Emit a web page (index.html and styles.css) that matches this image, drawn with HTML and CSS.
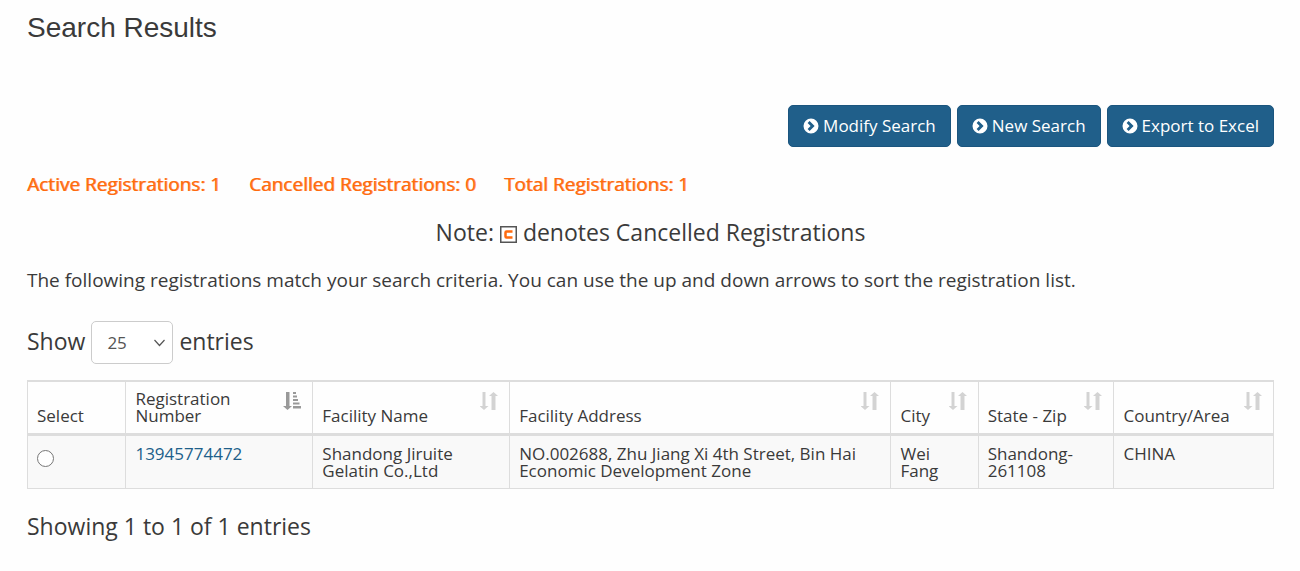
FILE: index.html
```
<!DOCTYPE html>
<html lang="en">
<head>
    <meta charset="UTF-8">
    <meta name="viewport" content="width=device-width, initial-scale=1.0">
    <title>Search Results</title>
    <link rel="stylesheet" href="styles.css">
</head>
<body>
    <!-- shared icons -->
    <svg class="sprite" aria-hidden="true">
        <symbol id="chevron" viewBox="0 0 16 16">
            <path fill="#fff" fill-rule="evenodd" d="M8 0.5a7.5 7.5 0 1 1 0 15a7.5 7.5 0 0 1 0-15zM6.600 3L4.600 5L7.600 8L4.600 11L6.600 13L11.600 8z"/>
        </symbol>
        <symbol id="sort" viewBox="0 0 18 18">
            <path d="M2.500 0h3v14h3l-4.500 4l-4.500-4h3zM11.500 18h4v-14h2.500l-4.500-4l-4.500 4h2.500z"/>
        </symbol>
        <symbol id="sort-asc" viewBox="0 0 18 18">
            <path d="M3 0h3.500v14h2.500l-4.500 4l-4.500-4h3zM10 0h3v2h-3zM10 3.500h4v2h-4zM10 7h5v2h-5zM10 10.500h6.500v2h-6.500zM10 14h8v2.500h-8z"/>
        </symbol>
    </svg>

    <div class="container">
        <h1>Search Results</h1>

        <div class="buttons">
            <button type="button"><svg class="btn-icon"><use href="#chevron"/></svg>Modify Search</button>
            <button type="button"><svg class="btn-icon"><use href="#chevron"/></svg>New Search</button>
            <button type="button"><svg class="btn-icon"><use href="#chevron"/></svg>Export to Excel</button>
        </div>

        <div class="totals">
            <span>Active Registrations: 1</span>
            <span>Cancelled Registrations: 0</span>
            <span>Total Registrations: 1</span>
        </div>

        <p class="note">Note:
            <svg class="cancelled-icon" viewBox="0 0 17 17" role="img" aria-label="Cancelled">
                <rect x="0.750" y="0.750" width="15.500" height="15.500" fill="#fff" stroke="#555" stroke-width="1.500"/>
                <path d="M12.500 5.500H6.500Q5.500 5.500 5.500 6.500V10.500Q5.500 11.500 6.500 11.500H12.500" fill="none" stroke="#ff6a0d" stroke-width="2.500"/>
            </svg>
            denotes Cancelled Registrations</p>

        <p class="intro">The following registrations match your search criteria. You can use the up and down arrows to sort the registration list.</p>

        <div class="length">
            <label for="page-length">Show</label>
            <span class="select-wrap">
                <select id="page-length">
                    <option>10</option>
                    <option selected>25</option>
                    <option>50</option>
                    <option>100</option>
                </select>
                <svg class="arrow" viewBox="0 0 12 8"><path d="M1 1L6 6.500L11 1" fill="none" stroke="#555" stroke-width="1.200"/></svg>
            </span>
            <label for="page-length">entries</label>
        </div>

        <table>
            <colgroup>
                <col class="col-select">
                <col class="col-number">
                <col class="col-name">
                <col class="col-address">
                <col class="col-city">
                <col class="col-state">
                <col class="col-country">
            </colgroup>
            <thead>
                <tr>
                    <th>Select</th>
                    <th>Registration Number<svg class="sort active"><use href="#sort-asc"/></svg></th>
                    <th>Facility Name<svg class="sort"><use href="#sort"/></svg></th>
                    <th>Facility Address<svg class="sort"><use href="#sort"/></svg></th>
                    <th>City<svg class="sort"><use href="#sort"/></svg></th>
                    <th>State - Zip<svg class="sort"><use href="#sort"/></svg></th>
                    <th>Country/Area<svg class="sort"><use href="#sort"/></svg></th>
                </tr>
            </thead>
            <tbody>
                <tr>
                    <td><input type="radio" name="registration" aria-label="Select 13945774472"></td>
                    <td><a href="#">13945774472</a></td>
                    <td>Shandong Jiruite Gelatin Co.,Ltd</td>
                    <td>NO.002688, Zhu Jiang Xi 4th Street, Bin Hai Economic Development Zone</td>
                    <td>Wei Fang</td>
                    <td>Shandong-261108</td>
                    <td>CHINA</td>
                </tr>
            </tbody>
        </table>

        <p class="info">Showing 1 to 1 of 1 entries</p>
    </div>
</body>
</html>
```
FILE: styles.css
```
* {
    box-sizing: border-box;
}
body {
    margin: 0;
    background-color: #fefefe;
    color: #3a3a3a;
    font-family: "Open Sans", sans-serif;
    font-size: 23px;
}
.sprite {
    display: none;
}
.container {
    padding: 12px 26px 12px 27px;
}
h1 {
    margin: 0;
    font-family: "Liberation Sans", Arial, sans-serif;
    font-size: 28px;
    font-weight: normal;
    line-height: 32px;
}
.buttons {
    display: flex;
    justify-content: flex-end;
    gap: 6px;
    margin-top: 61px;
}
button {
    display: flex;
    align-items: center;
    gap: 4px;
    height: 42px;
    padding: 0 14px 1px;
    border: 1px solid #1b557e;
    border-radius: 5px;
    background-color: #205f8a;
    color: #fff;
    font-family: inherit;
    font-size: 17px;
    cursor: pointer;
}
.btn-icon {
    width: 16px;
    height: 16px;
}
.totals {
    display: flex;
    gap: 28px;
    margin-top: 24px;
    color: #ff6a0d;
    font-size: 19px;
    line-height: 26px;
    text-shadow: 1px 0 rgba(255, 106, 13, 0.7);
}
.note {
    margin: 20px 0 0;
    line-height: 30px;
    text-align: center;
}
.cancelled-icon {
    width: 17px;
    height: 17px;
    vertical-align: -2px;
}
.intro {
    margin: 20px 0 0;
    font-size: 19px;
    line-height: 26px;
}
.length {
    display: flex;
    align-items: center;
    gap: 6px;
    margin-top: 28px;
    line-height: 36px;
}
.length label {
    padding-bottom: 4px;
}
.select-wrap {
    position: relative;
}
select {
    display: block;
    width: 82px;
    height: 43px;
    padding: 0 15px;
    border: 1px solid #ccc;
    border-radius: 5px;
    background: #fff;
    color: #555;
    font-family: inherit;
    font-size: 17px;
    appearance: none;
}
.arrow {
    position: absolute;
    top: 18px;
    right: 7px;
    width: 13px;
    height: 8px;
    pointer-events: none;
}
table {
    width: 100%;
    margin-top: 16px;
    border-collapse: collapse;
    table-layout: fixed;
    font-size: 17px;
    line-height: 17px;
}
.col-select { width: 7.9%; }
.col-number { width: 15%; }
.col-name { width: 15.8%; }
.col-address { width: 30.6%; }
.col-city { width: 7%; }
.col-state { width: 10.9%; }
.col-country { width: 12.8%; }
th, td {
    position: relative;
    border: 1px solid #ddd;
    padding: 9px;
    text-align: left;
    vertical-align: top;
}
th {
    padding-top: 8px;
    border-top-width: 2px;
    border-bottom-width: 3px;
    font-weight: normal;
    vertical-align: bottom;
}
th:nth-child(2) {
    padding-right: 32px;
}
td {
    background-color: #f9f9f9;
}
a {
    color: #205f8a;
    text-decoration: none;
}
input[type="radio"] {
    display: block;
    width: 17px;
    height: 17px;
    margin: 5px 0 0;
}
.sort {
    position: absolute;
    top: 10px;
    right: 11px;
    width: 18px;
    height: 18px;
    fill: #d3d3d3;
}
.sort.active {
    fill: #999;
}
.info {
    margin: 22px 0 0;
    line-height: 30px;
}
```
